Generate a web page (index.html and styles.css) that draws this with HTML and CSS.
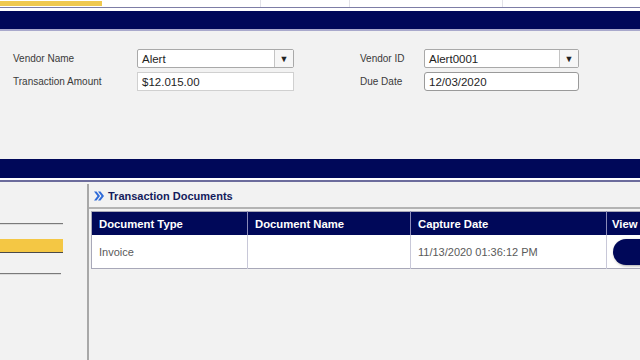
FILE: index.html
```html
<!DOCTYPE html>
<html lang="en">
<head>
    <meta charset="UTF-8">
    <meta name="viewport" content="width=device-width, initial-scale=1.0">
    <title>Transaction</title>
    <link rel="stylesheet" href="styles.css">
</head>
<body>
    <div class="topnav">
        <div class="tabs">
            <div class="tab active" style="width: 102px"></div>
            <div class="tab" style="width: 159px"></div>
            <div class="tab" style="width: 89px"></div>
            <div class="tab" style="width: 153px"></div>
            <div class="tab last"></div>
        </div>
        <div class="bar"></div>
    </div>

    <div class="form">
        <label class="label">Vendor Name</label>
        <div class="field select">
            <span class="value">Alert</span>
            <span class="arrow">&#9660;</span>
        </div>
        <span></span>
        <label class="label">Vendor ID</label>
        <div class="field select">
            <span class="value">Alert0001</span>
            <span class="arrow">&#9660;</span>
        </div>

        <label class="label">Transaction Amount</label>
        <div class="field flat"><span class="value">$12.015.00</span></div>
        <span></span>
        <label class="label">Due Date</label>
        <div class="field round"><span class="value">12/03/2020</span></div>
    </div>

    <div class="bar bar-second"></div>

    <div class="content">
        <div class="sidebar">
            <div class="side-line"></div>
            <div class="side-active"></div>
            <div class="side-line short"></div>
        </div>
        <div class="panel">
            <div class="panel-title">
                <svg width="10" height="10" viewBox="0 0 10 10">
                    <path d="M0 0.5 L2.5 0.5 L6 5 L2.5 9.5 L0 9.5 L3.5 5 Z" fill="#2f6bd8"/>
                    <path d="M4 0.5 L6.5 0.5 L10 5 L6.5 9.5 L4 9.5 L7.5 5 Z" fill="#2f6bd8"/>
                </svg>
                <span>Transaction Documents</span>
            </div>
            <table class="docs">
                <colgroup>
                    <col style="width: 156px">
                    <col style="width: 163px">
                    <col style="width: 196px">
                    <col style="width: 80px">
                </colgroup>
                <thead>
                    <tr>
                        <th>Document Type</th>
                        <th>Document Name</th>
                        <th>Capture Date</th>
                        <th class="view-head">View</th>
                    </tr>
                </thead>
                <tbody>
                    <tr>
                        <td>Invoice</td>
                        <td></td>
                        <td>11/13/2020 01:36:12 PM</td>
                        <td class="view-cell"><button class="view-btn"></button></td>
                    </tr>
                </tbody>
            </table>
        </div>
    </div>
</body>
</html>
```

FILE: styles.css
```css
html, body {
    margin: 0;
    padding: 0;
}
body {
    font-family: "Liberation Sans", Arial, sans-serif;
    background-color: #f2f2f2;
    width: 640px;
    height: 360px;
    overflow: hidden;
}
.topnav {
    background: #ffffff;
}
.tabs {
    display: flex;
    height: 7px;
    border-bottom: 1px solid #7d7da6;
}
.tab {
    box-sizing: border-box;
    border-right: 1px solid #e2e2e8;
}
.tab.active {
    margin-top: 1px;
    height: 5px;
    background: #efc84f;
    border-right: none;
}
.tab.last {
    flex: 1;
    border-right: none;
}
.bar {
    height: 18px;
    margin-top: 3px;
    background: #000859;
    border-bottom: 2px solid #a9a9cc;
}
.form {
    display: grid;
    grid-template-columns: 124px 157px 66px 64px 155px;
    grid-template-rows: 19px 19px;
    row-gap: 4px;
    align-items: center;
    padding: 18px 0 0 13px;
    height: 92px;
    font-size: 11px;
    color: #333333;
}
.label {
    font-size: 10px;
    color: #3a3a3a;
}
.field {
    box-sizing: border-box;
    height: 19px;
    background: #ffffff;
    border: 1px solid #a9a9a9;
    display: flex;
    align-items: center;
    font-size: 11.5px;
    color: #1e1e1e;
}
.field .value {
    flex: 1;
    padding-left: 4px;
}
.select {
    border-radius: 2px;
}
.select .arrow {
    width: 18px;
    height: 17px;
    border-left: 1px solid #c4c4c4;
    background: #f6f6f6;
    display: flex;
    align-items: center;
    justify-content: center;
    font-size: 9px;
    color: #222222;
}
.flat {
    border-color: #d0d0d0;
}
.round {
    border-radius: 3px;
    border-color: #9a9a9a;
}
.bar-second {
    margin-top: 18px;
    height: 19px;
    border-bottom: none;
    box-shadow: 0 2px 0 #ffffff, 0 4px 0 #6c6c9c;
}
.content {
    display: flex;
    margin-top: 6px;
    height: 176px;
}
.sidebar {
    width: 87px;
    border-right: 2px solid #a8a8a8;
    padding-top: 39px;
}
.side-line {
    width: 63px;
    height: 1px;
    background: #7a7a7a;
    border-bottom: 1px solid #dcdcdc;
}
.side-line.short {
    width: 61px;
    margin-top: 20px;
}
.side-active {
    width: 63px;
    height: 13px;
    margin-top: 14px;
    background: #f4c744;
    border-bottom: 1px solid #4a4a4a;
}
.panel {
    flex: 1;
    overflow: hidden;
}
.panel-title {
    display: flex;
    align-items: center;
    gap: 4px;
    height: 23px;
    padding-left: 5px;
    border-bottom: 2px solid #b4b4b4;
    font-size: 11px;
    font-weight: bold;
    color: #141b5c;
}
.docs {
    margin: 2px 0 0 2px;
    width: 595px;
    table-layout: fixed;
    border-collapse: collapse;
    border: 1px solid #a8a8b8;
    font-size: 11px;
}
.docs th {
    height: 23px;
    padding: 0 0 0 7px;
    background: #000859;
    color: #ffffff;
    font-size: 11.3px;
    text-align: left;
    border-right: 1px solid #8a8ab8;
    white-space: nowrap;
}
.docs th.view-head {
    padding-left: 5px;
}
.docs td {
    height: 33px;
    padding: 0 0 0 7px;
    background: #ffffff;
    color: #5a5a5a;
    border-right: 1px solid #c8c8d8;
}
.docs td.view-cell {
    padding-left: 6px;
}
.view-btn {
    display: block;
    width: 70px;
    height: 26px;
    border: none;
    border-radius: 13px;
    background: #000859;
    box-shadow: 1px 1px 3px rgba(0, 0, 0, 0.35);
}
```
